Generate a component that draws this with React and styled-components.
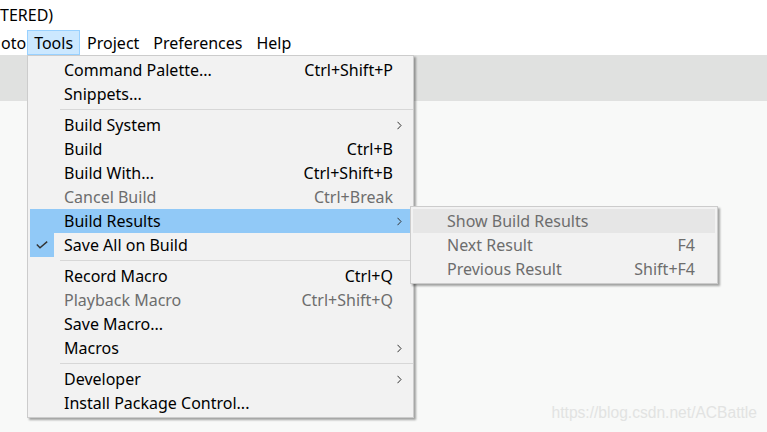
import React from "react";
import styled, { createGlobalStyle } from "styled-components";

const Global = createGlobalStyle`
  html, body { margin: 0; padding: 0; }
  body {
    width: 767px;
    height: 432px;
    overflow: hidden;
    background: #f8f9f8;
    font-family: "Noto Sans", "Open Sans", sans-serif;
  }
`;

const Window = styled.div`
  display: flex;
  flex-direction: column;
  width: 767px;
  height: 432px;
  position: relative;
`;

const TitleBar = styled.div`
  height: 30px;
  background: #ffffff;
  display: flex;
  align-items: center;
  font-size: 16px;
  color: #000;
  white-space: nowrap;
`;

const MenuBar = styled.div`
  height: 25px;
  background: #ffffff;
  display: flex;
  align-items: stretch;
  font-size: 16px;
`;

const BarItem = styled.div`
  display: flex;
  align-items: center;
  padding: ${(p) => (p.$first ? "0" : "0 6px")};
  box-sizing: border-box;
  border: 1px solid ${(p) => (p.$open ? "#99d1ff" : "transparent")};
  background: ${(p) => (p.$open ? "#cce8ff" : "transparent")};
  color: #000;
  white-space: nowrap;
`;

const TabStrip = styled.div`
  height: 46px;
  background: #e0e1e0;
`;

const Editor = styled.div`
  flex: 1;
  background: #f8f9f8;
  display: flex;
  justify-content: flex-end;
  align-items: flex-end;
  padding: 0 10px 10px 0;
`;

const Watermark = styled.div`
  font-family: "Liberation Sans", Arial, sans-serif;
  font-size: 15.6px;
  color: #e2e3e2;
`;

const Menu = styled.div`
  position: absolute;
  left: ${(p) => p.$left}px;
  top: ${(p) => p.$top}px;
  width: ${(p) => p.$width}px;
  box-sizing: border-box;
  padding: 2px;
  background: #f2f2f2;
  border: 1px solid #cccccc;
  box-shadow: 2px 2px 2px rgba(0, 0, 0, 0.35);
  font-size: 16px;
  z-index: ${(p) => p.$z || 10};
`;

const Row = styled.div`
  position: relative;
  height: 24px;
  display: grid;
  grid-template-columns: 24px 10px 1fr auto ${(p) => p.$tail}px;
  align-items: center;
  background: ${(p) =>
    p.$active ? "#91c9f7" : p.$hover ? "#e6e6e6" : "transparent"};
  color: ${(p) => (p.$disabled ? "#6d6d6d" : "#000")};
  white-space: nowrap;
`;

const Gutter = styled.div`
  grid-column: 1;
  height: 24px;
  display: flex;
  align-items: center;
  justify-content: center;
  background: ${(p) => (p.$checked ? "#91c9f7" : "transparent")};
`;

const Label = styled.span`
  grid-column: 3;
  line-height: 24px;
`;

const Shortcut = styled.span`
  grid-column: 4;
  line-height: 24px;
  padding-left: 24px;
`;

const Arrow = styled.span`
  grid-column: 5;
  display: flex;
  align-items: center;
  justify-content: flex-end;
  padding-right: 9px;
`;

const Separator = styled.div`
  height: 7px;
  display: flex;
  align-items: center;
  padding-left: 30px;
  margin-right: -2px;
  &::after {
    content: "";
    flex: 1;
    height: 1px;
    background: #d7d7d7;
  }
`;

const SubMenuAnchor = styled.div`
  position: absolute;
  left: calc(100% - 1px);
  top: -3px;
`;

const Check = () => (
  <svg width="12" height="8" viewBox="0 0 12 8">
    <path d="M0.8 3.6 L4 6.8 L11.2 0.6" fill="none" stroke="#333" strokeWidth="1.4" />
  </svg>
);

const Chevron = () => (
  <svg width="5" height="9" viewBox="0 0 5 9">
    <path d="M0.5 0.8 L4 4.5 L0.5 8.2" fill="none" stroke="#333" strokeWidth="1" />
  </svg>
);

const mainItems = [
  { label: "Command Palette...", shortcut: "Ctrl+Shift+P" },
  { label: "Snippets..." },
  "sep",
  { label: "Build System", sub: true },
  { label: "Build", shortcut: "Ctrl+B" },
  { label: "Build With...", shortcut: "Ctrl+Shift+B" },
  { label: "Cancel Build", shortcut: "Ctrl+Break", disabled: true },
  { label: "Build Results", sub: true, active: true, open: true },
  { label: "Save All on Build", checked: true },
  "sep",
  { label: "Record Macro", shortcut: "Ctrl+Q" },
  { label: "Playback Macro", shortcut: "Ctrl+Shift+Q", disabled: true },
  { label: "Save Macro..." },
  { label: "Macros", sub: true },
  "sep",
  { label: "Developer", sub: true },
  { label: "Install Package Control..." },
];

const subItems = [
  { label: "Show Build Results", disabled: true, hover: true },
  { label: "Next Result", shortcut: "F4", disabled: true },
  { label: "Previous Result", shortcut: "Shift+F4", disabled: true },
];

function MenuRows({ items, tail, children }) {
  return items.map((it, i) =>
    it === "sep" ? (
      <Separator key={i} />
    ) : (
      <Row
        key={i}
        $tail={tail}
        $active={it.active}
        $hover={it.hover}
        $disabled={it.disabled}
      >
        <Gutter $checked={it.checked}>{it.checked && <Check />}</Gutter>
        <Label>{it.label}</Label>
        {it.shortcut && <Shortcut>{it.shortcut}</Shortcut>}
        <Arrow>{it.sub && <Chevron />}</Arrow>
        {it.open && <SubMenuAnchor>{children}</SubMenuAnchor>}
      </Row>
    )
  );
}

export default function App() {
  return (
    <>
      <Global />
      <Window>
        <TitleBar>TERED)</TitleBar>
        <MenuBar>
          <BarItem $first>oto</BarItem>
          <BarItem $open>Tools</BarItem>
          <BarItem>Project</BarItem>
          <BarItem>Preferences</BarItem>
          <BarItem>Help</BarItem>
        </MenuBar>
        <TabStrip />
        <Editor>
          <Watermark>https://blog.csdn.net/ACBattle</Watermark>
        </Editor>
        <Menu $left={27} $top={55} $width={387}>
          <MenuRows items={mainItems} tail={18}>
            <Menu $left={0} $top={0} $width={308} $z={20}>
              <MenuRows items={subItems} tail={20} />
            </Menu>
          </MenuRows>
        </Menu>
      </Window>
    </>
  );
}
